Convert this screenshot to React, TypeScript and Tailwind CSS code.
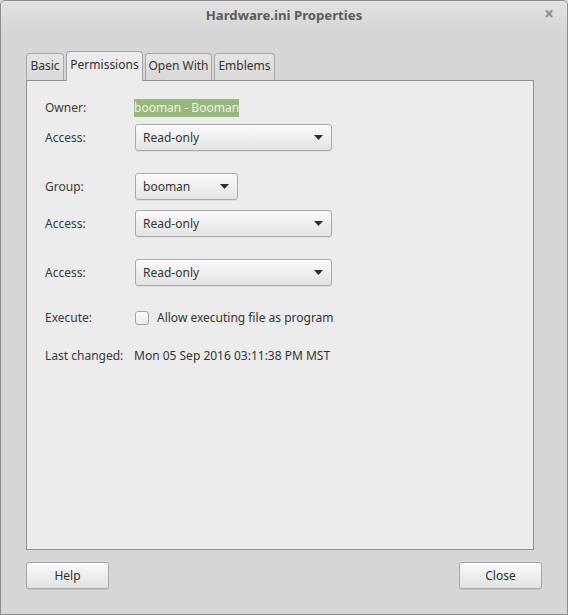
const font = { fontFamily: '"Noto Sans", "DejaVu Sans", sans-serif' };

function Caret() {
  return (
    <svg width="9" height="5" viewBox="0 0 9 5" className="shrink-0">
      <path d="M0 0h9L4.5 5z" fill="#2e2e2e" />
    </svg>
  );
}

function Combo({ value, width }: { value: string; width: string }) {
  return (
    <div
      className={`${width} h-[27px] flex items-center justify-between pl-[7px] pr-[8px] rounded-[3px] border border-[#a9a9a9] bg-gradient-to-b from-[#fbfbfb] to-[#e3e3e3] shadow-[0_1px_0_rgba(0,0,0,0.06)] text-[#333]`}
    >
      <span>{value}</span>
      <Caret />
    </div>
  );
}

function Row({ label, children, className = "" }: { label: string; children: React.ReactNode; className?: string }) {
  return (
    <div className={`flex items-center ${className}`}>
      <div className="w-[89px] shrink-0 whitespace-nowrap text-[#3a3a3a]">{label}</div>
      {children}
    </div>
  );
}

function Tab({ label, active, width }: { label: string; active?: boolean; width: string }) {
  return (
    <div
      className={
        active
          ? `${width} h-[30px] -mb-px flex items-center justify-center whitespace-nowrap rounded-t-[4px] border border-b-0 border-[#a3a3a3] bg-[#ececec] text-[#2e2e2e] pb-[3px] z-10`
          : `${width} h-[27px] flex items-center justify-center whitespace-nowrap rounded-t-[4px] border border-b-0 border-[#a8a8a8] bg-gradient-to-b from-[#e6e6e6] to-[#d9d9d9] text-[#333] pb-[2px]`
      }
    >
      {label}
    </div>
  );
}

function Button({ label }: { label: string }) {
  return (
    <button className="w-[83px] h-[27px] rounded-[3px] border border-[#a6a6a6] bg-gradient-to-b from-[#fbfbfb] to-[#e2e2e2] shadow-[0_1px_0_rgba(0,0,0,0.06)] text-[#2e2e2e]">
      {label}
    </button>
  );
}

export default function App() {
  return (
    <div className="w-[568px] h-[615px] text-[12px] bg-[#d6d6d6]" style={font}>
      <div className="w-full h-full flex flex-col border border-[#8c8c8c] rounded-t-[5px] overflow-hidden">
        <div className="h-[30px] shrink-0 relative flex items-center justify-center bg-gradient-to-b from-[#e2e2e2] to-[#d6d6d6]">
          <span className="font-bold text-[13.2px] text-[#5b5b5b] -mt-[1px]">Hardware.ini Properties</span>
          <span className="absolute right-[13px] top-[4px] text-[17px] font-bold text-[#8e8e8e] leading-none">×</span>
        </div>

        <div className="flex-1 flex flex-col pl-[25px] pr-[25px] pt-[20px]">
          <div className="flex items-end gap-[2px]">
            <Tab label="Basic" width="w-[38px]" />
            <Tab label="Permissions" width="w-[77px]" active />
            <Tab label="Open With" width="w-[67px]" />
            <Tab label="Emblems" width="w-[61px]" />
          </div>

          <div className="w-[508px] h-[470px] border border-[#8e8e8e] bg-[#ececec] pl-[18px] pt-[18px] flex flex-col">
            <Row label="Owner:" className="h-[18px]">
              <span className="bg-[#98b77c] text-[#eef4e6] leading-[18px]">booman - Booman</span>
            </Row>
            <Row label="Access:" className="mt-[7px]">
              <div className="pl-[1px]">
                <Combo value="Read-only" width="w-[197px]" />
              </div>
            </Row>
            <Row label="Group:" className="mt-[22px]">
              <div className="pl-[1px]">
                <Combo value="booman" width="w-[103px]" />
              </div>
            </Row>
            <Row label="Access:" className="mt-[10px]">
              <div className="pl-[1px]">
                <Combo value="Read-only" width="w-[197px]" />
              </div>
            </Row>
            <Row label="Access:" className="mt-[22px]">
              <div className="pl-[1px]">
                <Combo value="Read-only" width="w-[197px]" />
              </div>
            </Row>
            <Row label="Execute:" className="mt-[22px] h-[20px]">
              <div className="pl-[1px] flex items-center">
                <div className="w-[14px] h-[14px] rounded-[3px] border border-[#a3a3a3] bg-gradient-to-b from-[#fafafa] to-[#ececec]" />
                <span className="ml-[8px] text-[#333]">Allow executing file as program</span>
              </div>
            </Row>
            <Row label="Last changed:" className="mt-[18px] h-[20px]">
              <span className="text-[#333]">Mon 05 Sep 2016 03:11:38 PM MST</span>
            </Row>
          </div>

          <div className="w-[516px] mt-[12px] flex justify-between">
            <Button label="Help" />
            <Button label="Close" />
          </div>
        </div>
      </div>
    </div>
  );
}
